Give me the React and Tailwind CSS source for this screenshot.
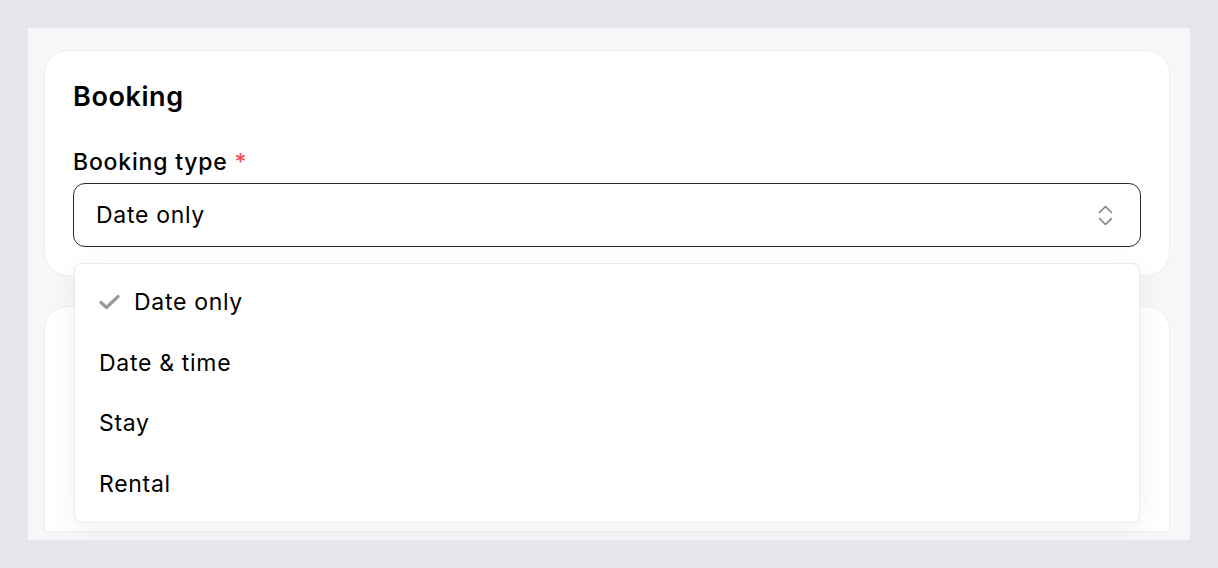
import { useState } from "react";

const options = ["Date only", "Date & time", "Stay", "Rental"];

const CheckIcon = () => (
	<svg width="21" height="16" viewBox="0 0 21 16" fill="none" className="shrink-0">
		<path d="M2 8.5l5.5 5L19 2.5" stroke="#9a9a9a" strokeWidth="3.2" strokeLinecap="round" strokeLinejoin="round" />
	</svg>
);

const UpDownIcon = () => (
	<svg width="15" height="21" viewBox="0 0 15 21" fill="none">
		<path d="M1.5 7.5L7.5 1.5l6 6" stroke="#7b8190" strokeWidth="1.6" strokeLinecap="round" strokeLinejoin="round" />
		<path d="M1.5 13.5l6 6 6-6" stroke="#7b8190" strokeWidth="1.6" strokeLinecap="round" strokeLinejoin="round" />
	</svg>
);

const App = () => {
	const [value, setValue] = useState("Date only");

	return (
		<div
			className="h-[568px] w-full bg-[#e4e6e9] p-[28px] overflow-hidden"
			style={{ fontFamily: "Inter, 'Noto Sans', 'Liberation Sans', sans-serif" }}
		>
			<div className="h-[512px] bg-[#f6f7f9] pt-[22px] pl-[16px] pr-[20px] overflow-hidden">
				<div className="bg-white rounded-[24px] border border-[#eceef1] px-[28px] pt-[30px] pb-[28px]">
					<div className="text-[27px] leading-[32px] font-semibold tracking-[0.6px] text-black">Booking</div>

					<div className="mt-[35px] text-[23px] leading-[28px] font-medium tracking-[0.8px] text-black">
						Booking type <span className="text-[#f05252]">*</span>
					</div>

					<div className="relative mt-[7px]">
						<div className="h-[64px] border border-[#2a2a2a] rounded-[12px] flex items-center justify-between pl-[22px] pr-[27px]">
							<span className="text-[23px] tracking-[0.7px] text-black">{value}</span>
							<UpDownIcon />
						</div>

						<div className="absolute z-10 left-px right-px top-[80px] bg-white border border-[#e8e9ec] rounded-[8px] py-[8px] shadow-[0_6px_28px_rgba(0,0,0,0.06)]">
							{options.map((opt) => (
								<div
									key={opt}
									className="h-[60.5px] flex items-center pl-[24px] text-[23px] tracking-[0.7px] text-black cursor-pointer"
									onClick={() => setValue(opt)}
								>
									{opt === value && (
										<span className="mr-[14px] flex items-center">
											<CheckIcon />
										</span>
									)}
									{opt}
								</div>
							))}
						</div>
					</div>
				</div>

				<div className="mt-[30px] h-[226px] bg-white rounded-t-[24px] border border-[#eceef1]"></div>
			</div>
		</div>
	);
};

export default App;
